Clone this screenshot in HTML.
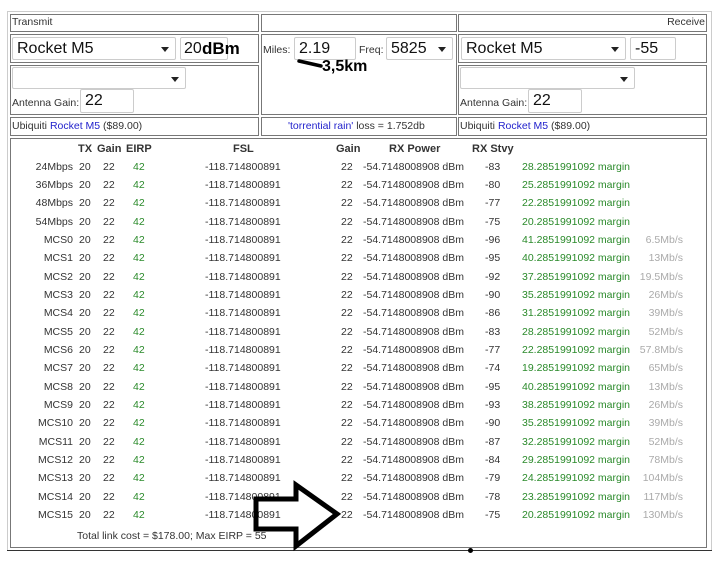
<!DOCTYPE html>
<html><head><style>
body{margin:0;width:727px;height:564px;background:#fff;font-family:"Liberation Sans",sans-serif;font-size:10.5px;color:#333;position:relative;overflow:hidden}
.a{position:absolute}
.c{position:absolute;border:1px solid #777;box-sizing:border-box}
.in{position:absolute;border:1px solid #ccc;border-radius:2px;box-sizing:border-box;background:#fff;font-size:16px;color:#111;padding-left:4px;line-height:21px}
.sel:after{content:"";position:absolute;right:6px;top:9px;border:4px solid transparent;border-top:5px solid #222;border-bottom:0}
.r{position:absolute;left:0;width:727px;height:18px}
.r span{position:absolute;white-space:nowrap}
.g{color:#2a8a2a}.gr{color:#aaa}
.blue{color:#22c}
</style></head><body>
<div class="a" style="left:7px;top:11px;width:705px;height:540px;border:1px solid #ccc;border-bottom:1px solid #bbb;box-sizing:border-box"></div>
<div class="a" style="left:7px;top:550px;width:705px;height:1px;background:#333"></div>
<div class="a" style="left:468px;top:548px;width:5px;height:5px;border-radius:50%;background:#000"></div>

<div class="c" style="left:10px;top:14px;width:249px;height:18px"></div>
<div class="a" style="left:12px;top:16px">Transmit</div>
<div class="c" style="left:261px;top:14px;width:196px;height:18px"></div>
<div class="c" style="left:458px;top:14px;width:249px;height:18px"></div>
<div class="a" style="left:655px;top:16px;width:50px;text-align:right">Receive</div>

<div class="c" style="left:10px;top:34px;width:249px;height:29px"></div>
<div class="in sel" style="left:12px;top:37px;width:164px;height:23px">Rocket M5</div>
<div class="in" style="left:180px;top:37px;width:48px;height:23px;padding-left:3px">20</div>
<div class="a" style="left:202px;top:39px;font-size:17px;font-weight:bold;color:#000">dBm</div>

<div class="c" style="left:10px;top:65px;width:249px;height:50px"></div>
<div class="in sel" style="left:12px;top:67px;width:174px;height:22px"></div>
<div class="a" style="left:12px;top:97px">Antenna Gain:</div>
<div class="in" style="left:80px;top:89px;width:54px;height:24px">22</div>

<div class="c" style="left:261px;top:34px;width:196px;height:81px"></div>
<div class="a" style="left:263px;top:44px">Miles:</div>
<div class="in" style="left:294px;top:37px;width:62px;height:23px">2.19</div>
<div class="a" style="left:359px;top:44px">Freq:</div>
<div class="in sel" style="left:386px;top:37px;width:67px;height:23px">5825</div>
<svg class="a" style="left:295px;top:58px" width="30" height="14"><path d="M4 3 L26 8" stroke="#000" stroke-width="3.5" stroke-linecap="round"/></svg>
<div class="a" style="left:322px;top:58px;font-size:16px;font-weight:bold;color:#000">3,5km</div>

<div class="c" style="left:458px;top:34px;width:249px;height:29px"></div>
<div class="in sel" style="left:461px;top:37px;width:165px;height:23px">Rocket M5</div>
<div class="in" style="left:630px;top:37px;width:46px;height:23px">-55</div>
<div class="c" style="left:458px;top:65px;width:249px;height:50px"></div>
<div class="in sel" style="left:460px;top:67px;width:175px;height:22px"></div>
<div class="a" style="left:460px;top:97px">Antenna Gain:</div>
<div class="in" style="left:528px;top:89px;width:54px;height:24px">22</div>

<div class="c" style="left:10px;top:117px;width:249px;height:19px"></div>
<div class="a" style="left:12px;top:120px">Ubiquiti <span class="blue">Rocket M5</span> ($89.00)</div>
<div class="c" style="left:261px;top:117px;width:196px;height:19px"></div>
<div class="a" style="left:288px;top:120px"><span class="blue">'torrential rain'</span> loss = 1.752db</div>
<div class="c" style="left:458px;top:117px;width:249px;height:19px"></div>
<div class="a" style="left:460px;top:120px">Ubiquiti <span class="blue">Rocket M5</span> ($89.00)</div>

<div class="c" style="left:10px;top:138px;width:697px;height:410px"></div>
<div class="r" style="top:143px;font-weight:bold;font-size:11px;color:#333"><span style="left:78px">TX</span><span style="left:97px">Gain</span><span style="left:126px">EIRP</span><span style="left:233px">FSL</span><span style="left:336px">Gain</span><span style="left:389px">RX Power</span><span style="left:472px">RX Stvy</span></div>
<div class="a" style="left:77px;top:530px">Total link cost = $178.00; Max EIRP = 55</div>

<div class="r" style="top:161px"><span style="right:654px">24Mbps</span><span style="left:79px">20</span><span style="left:103px">22</span><span class="g" style="left:133px">42</span><span style="left:205px">-118.714800891</span><span style="left:341px">22</span><span style="left:363px">-54.7148008908 dBm</span><span style="left:485px">-83</span><span class="g" style="left:522px">28.2851991092 margin</span></div>
<div class="r" style="top:179px"><span style="right:654px">36Mbps</span><span style="left:79px">20</span><span style="left:103px">22</span><span class="g" style="left:133px">42</span><span style="left:205px">-118.714800891</span><span style="left:341px">22</span><span style="left:363px">-54.7148008908 dBm</span><span style="left:485px">-80</span><span class="g" style="left:522px">25.2851991092 margin</span></div>
<div class="r" style="top:197px"><span style="right:654px">48Mbps</span><span style="left:79px">20</span><span style="left:103px">22</span><span class="g" style="left:133px">42</span><span style="left:205px">-118.714800891</span><span style="left:341px">22</span><span style="left:363px">-54.7148008908 dBm</span><span style="left:485px">-77</span><span class="g" style="left:522px">22.2851991092 margin</span></div>
<div class="r" style="top:216px"><span style="right:654px">54Mbps</span><span style="left:79px">20</span><span style="left:103px">22</span><span class="g" style="left:133px">42</span><span style="left:205px">-118.714800891</span><span style="left:341px">22</span><span style="left:363px">-54.7148008908 dBm</span><span style="left:485px">-75</span><span class="g" style="left:522px">20.2851991092 margin</span></div>
<div class="r" style="top:234px"><span style="right:654px">MCS0</span><span style="left:79px">20</span><span style="left:103px">22</span><span class="g" style="left:133px">42</span><span style="left:205px">-118.714800891</span><span style="left:341px">22</span><span style="left:363px">-54.7148008908 dBm</span><span style="left:485px">-96</span><span class="g" style="left:522px">41.2851991092 margin</span><span class="gr" style="right:44px">6.5Mb/s</span></div>
<div class="r" style="top:252px"><span style="right:654px">MCS1</span><span style="left:79px">20</span><span style="left:103px">22</span><span class="g" style="left:133px">42</span><span style="left:205px">-118.714800891</span><span style="left:341px">22</span><span style="left:363px">-54.7148008908 dBm</span><span style="left:485px">-95</span><span class="g" style="left:522px">40.2851991092 margin</span><span class="gr" style="right:44px">13Mb/s</span></div>
<div class="r" style="top:271px"><span style="right:654px">MCS2</span><span style="left:79px">20</span><span style="left:103px">22</span><span class="g" style="left:133px">42</span><span style="left:205px">-118.714800891</span><span style="left:341px">22</span><span style="left:363px">-54.7148008908 dBm</span><span style="left:485px">-92</span><span class="g" style="left:522px">37.2851991092 margin</span><span class="gr" style="right:44px">19.5Mb/s</span></div>
<div class="r" style="top:289px"><span style="right:654px">MCS3</span><span style="left:79px">20</span><span style="left:103px">22</span><span class="g" style="left:133px">42</span><span style="left:205px">-118.714800891</span><span style="left:341px">22</span><span style="left:363px">-54.7148008908 dBm</span><span style="left:485px">-90</span><span class="g" style="left:522px">35.2851991092 margin</span><span class="gr" style="right:44px">26Mb/s</span></div>
<div class="r" style="top:307px"><span style="right:654px">MCS4</span><span style="left:79px">20</span><span style="left:103px">22</span><span class="g" style="left:133px">42</span><span style="left:205px">-118.714800891</span><span style="left:341px">22</span><span style="left:363px">-54.7148008908 dBm</span><span style="left:485px">-86</span><span class="g" style="left:522px">31.2851991092 margin</span><span class="gr" style="right:44px">39Mb/s</span></div>
<div class="r" style="top:326px"><span style="right:654px">MCS5</span><span style="left:79px">20</span><span style="left:103px">22</span><span class="g" style="left:133px">42</span><span style="left:205px">-118.714800891</span><span style="left:341px">22</span><span style="left:363px">-54.7148008908 dBm</span><span style="left:485px">-83</span><span class="g" style="left:522px">28.2851991092 margin</span><span class="gr" style="right:44px">52Mb/s</span></div>
<div class="r" style="top:344px"><span style="right:654px">MCS6</span><span style="left:79px">20</span><span style="left:103px">22</span><span class="g" style="left:133px">42</span><span style="left:205px">-118.714800891</span><span style="left:341px">22</span><span style="left:363px">-54.7148008908 dBm</span><span style="left:485px">-77</span><span class="g" style="left:522px">22.2851991092 margin</span><span class="gr" style="right:44px">57.8Mb/s</span></div>
<div class="r" style="top:362px"><span style="right:654px">MCS7</span><span style="left:79px">20</span><span style="left:103px">22</span><span class="g" style="left:133px">42</span><span style="left:205px">-118.714800891</span><span style="left:341px">22</span><span style="left:363px">-54.7148008908 dBm</span><span style="left:485px">-74</span><span class="g" style="left:522px">19.2851991092 margin</span><span class="gr" style="right:44px">65Mb/s</span></div>
<div class="r" style="top:381px"><span style="right:654px">MCS8</span><span style="left:79px">20</span><span style="left:103px">22</span><span class="g" style="left:133px">42</span><span style="left:205px">-118.714800891</span><span style="left:341px">22</span><span style="left:363px">-54.7148008908 dBm</span><span style="left:485px">-95</span><span class="g" style="left:522px">40.2851991092 margin</span><span class="gr" style="right:44px">13Mb/s</span></div>
<div class="r" style="top:399px"><span style="right:654px">MCS9</span><span style="left:79px">20</span><span style="left:103px">22</span><span class="g" style="left:133px">42</span><span style="left:205px">-118.714800891</span><span style="left:341px">22</span><span style="left:363px">-54.7148008908 dBm</span><span style="left:485px">-93</span><span class="g" style="left:522px">38.2851991092 margin</span><span class="gr" style="right:44px">26Mb/s</span></div>
<div class="r" style="top:417px"><span style="right:654px">MCS10</span><span style="left:79px">20</span><span style="left:103px">22</span><span class="g" style="left:133px">42</span><span style="left:205px">-118.714800891</span><span style="left:341px">22</span><span style="left:363px">-54.7148008908 dBm</span><span style="left:485px">-90</span><span class="g" style="left:522px">35.2851991092 margin</span><span class="gr" style="right:44px">39Mb/s</span></div>
<div class="r" style="top:436px"><span style="right:654px">MCS11</span><span style="left:79px">20</span><span style="left:103px">22</span><span class="g" style="left:133px">42</span><span style="left:205px">-118.714800891</span><span style="left:341px">22</span><span style="left:363px">-54.7148008908 dBm</span><span style="left:485px">-87</span><span class="g" style="left:522px">32.2851991092 margin</span><span class="gr" style="right:44px">52Mb/s</span></div>
<div class="r" style="top:454px"><span style="right:654px">MCS12</span><span style="left:79px">20</span><span style="left:103px">22</span><span class="g" style="left:133px">42</span><span style="left:205px">-118.714800891</span><span style="left:341px">22</span><span style="left:363px">-54.7148008908 dBm</span><span style="left:485px">-84</span><span class="g" style="left:522px">29.2851991092 margin</span><span class="gr" style="right:44px">78Mb/s</span></div>
<div class="r" style="top:472px"><span style="right:654px">MCS13</span><span style="left:79px">20</span><span style="left:103px">22</span><span class="g" style="left:133px">42</span><span style="left:205px">-118.714800891</span><span style="left:341px">22</span><span style="left:363px">-54.7148008908 dBm</span><span style="left:485px">-79</span><span class="g" style="left:522px">24.2851991092 margin</span><span class="gr" style="right:44px">104Mb/s</span></div>
<div class="r" style="top:491px"><span style="right:654px">MCS14</span><span style="left:79px">20</span><span style="left:103px">22</span><span class="g" style="left:133px">42</span><span style="left:205px">-118.714800891</span><span style="left:341px">22</span><span style="left:363px">-54.7148008908 dBm</span><span style="left:485px">-78</span><span class="g" style="left:522px">23.2851991092 margin</span><span class="gr" style="right:44px">117Mb/s</span></div>
<div class="r" style="top:509px"><span style="right:654px">MCS15</span><span style="left:79px">20</span><span style="left:103px">22</span><span class="g" style="left:133px">42</span><span style="left:205px">-118.714800891</span><span style="left:341px">22</span><span style="left:363px">-54.7148008908 dBm</span><span style="left:485px">-75</span><span class="g" style="left:522px">20.2851991092 margin</span><span class="gr" style="right:44px">130Mb/s</span></div>

<svg class="a" style="left:0;top:0" width="727" height="564"><path d="M256 499 L296 499 L296 485 L337 514 L296 546 L296 529 L256 529 Z" fill="none" stroke="#000" stroke-width="5" stroke-linejoin="miter"/></svg>
</body></html>
